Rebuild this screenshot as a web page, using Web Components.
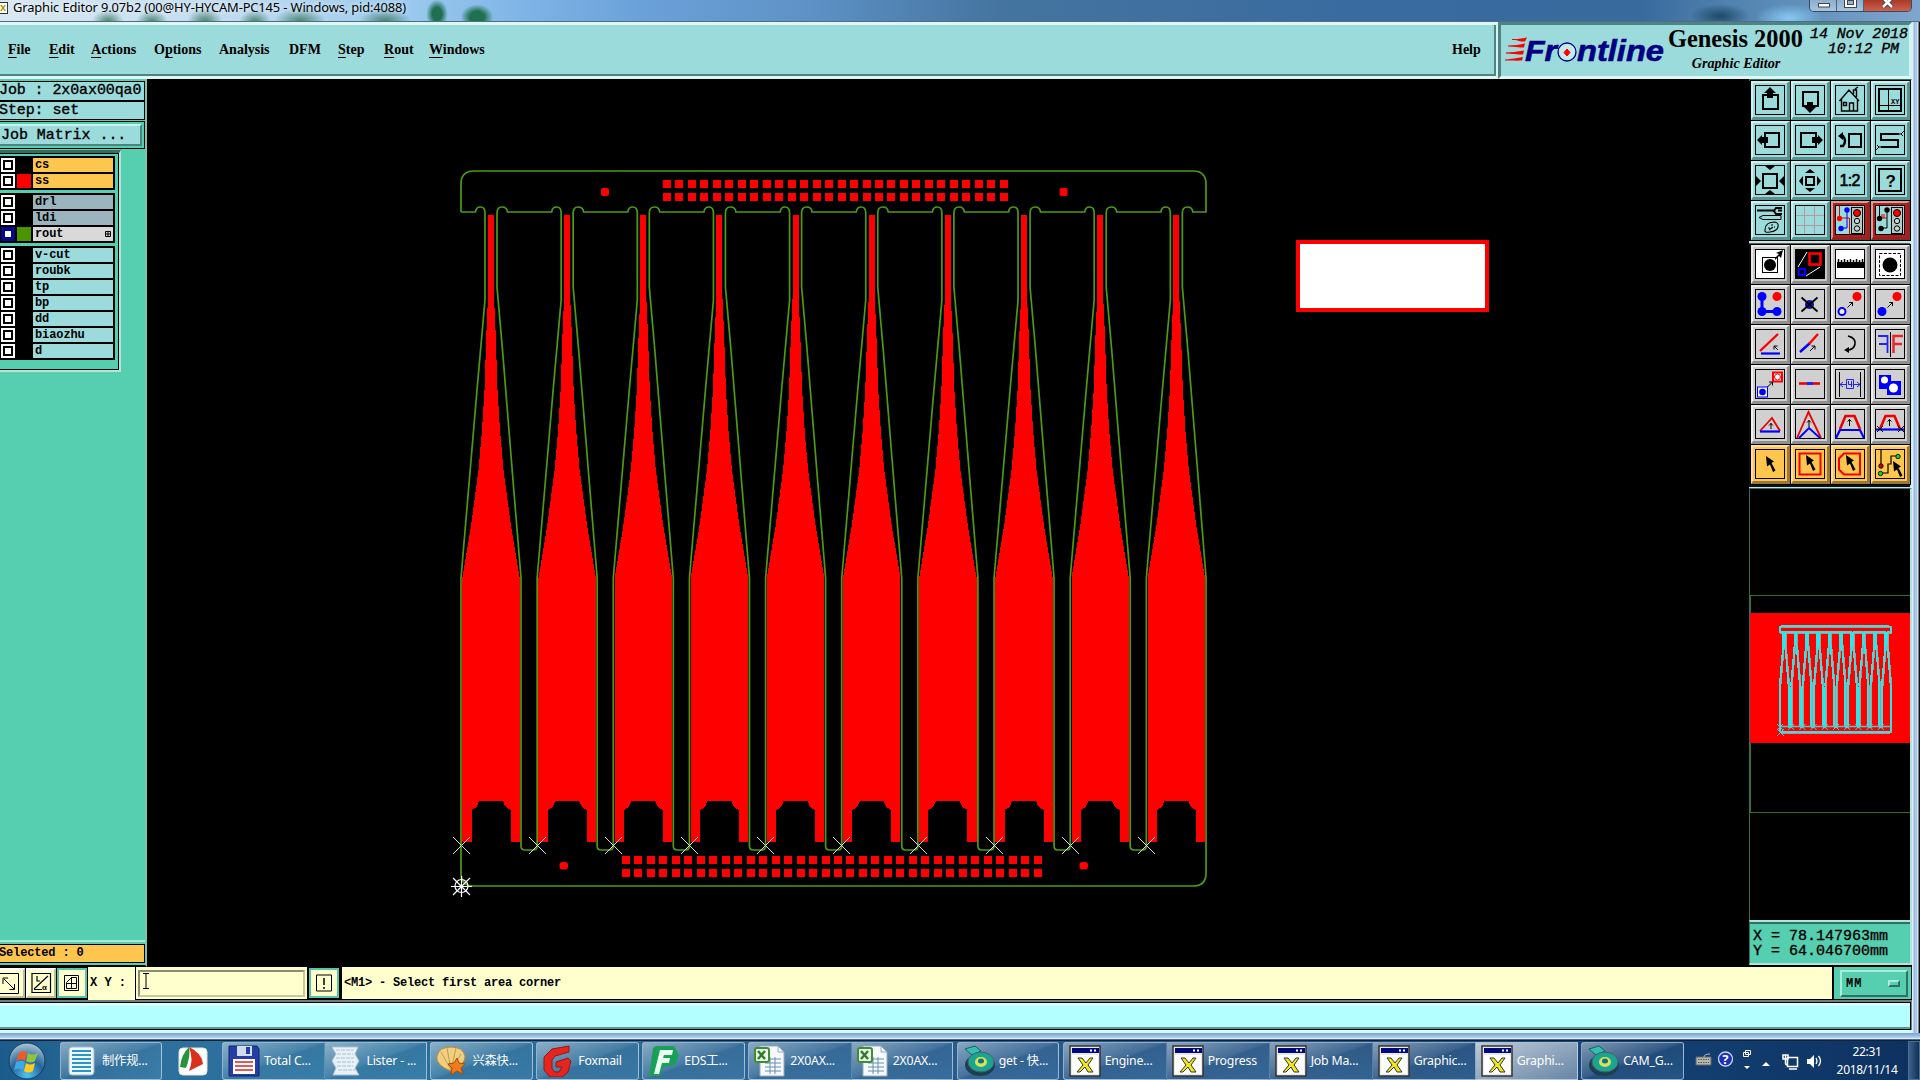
<!DOCTYPE html>
<html lang="en">
<head>
<meta charset="utf-8">
<title>Graphic Editor 9.07b2</title>
<style>
  body {
    margin: 0;
    width: 1920px;
    height: 1080px;
    overflow: hidden;
    background: #000;
  }
</style>
</head>
<body>
<graphic-editor></graphic-editor>
<script>
class BaseElement extends HTMLElement {
  connectedCallback() {
    if (this.shadowRoot) return
    const template = document.createElement('template')
    template.innerHTML = `<style>* { box-sizing: border-box; } ${this.css()}</style>${this.html()}`
    this.attachShadow({ mode: 'open' })
    this.shadowRoot.appendChild(template.content.cloneNode(true))
  }

  css() { return '' }
  html() { return '<slot></slot>' }
}

/* ---------- board geometry ---------- */

const PITCH = 76.15
const UNITS = 10
const range = n => Array.from({ length: n }, (_, i) => i)

function outlinePath() {
  let d = 'M461 212 V184 Q461 171 474 171 H1193 Q1206 171 1206 184 V212 H1193'
  // finger contour, walked from the right
  for (let k = UNITS - 1; k >= 0; k--) {
    const x = 461 + PITCH * k
    d += ` H${x + 46.5} Q${x + 46} 207 ${x + 41} 207 Q${x + 36} 207 ${x + 36} 213`
    d += k === UNITS - 1
      ? ` V287 L${x + 41.5} 350 L${x + 51} 468 L${x + 59.7} 578 V873 Q1206 886 1193 886 H474 Q461 886 461 873 V578`
      : ` V287 L${x + 41.5} 350 L${x + 51} 468 L${x + 60} 578 V846 Q${x + 60} 850 ${x + 64} 850 H${x + 72} Q${x + 76.15} 850 ${x + 76.15} 846 V578`
    d += ` M${x + 24} 213 V300 L${x + 16} 390 L${x} 578`
    d += ` M${x + 24} 213 Q${x + 24} 207 ${x + 19.5} 207 Q${x + 15} 207 ${x + 14.5} 212`
  }
  return d + ' H461'
}

function fingerPath(k) {
  const c = 491 + PITCH * k
  const side = [[3, 215], [3, 297], [4.5, 330], [6.5, 390], [9, 430], [12.5, 470], [20, 526], [28.7, 578], [28.7, 842], [19.5, 842], [19.5, 810], [16, 808], [14, 806], [12, 801]]
  const right = side.map(([w, y]) => `${c + w} ${y}`)
  const left = side.map(([w, y]) => `${c - w} ${y}`).reverse()
  return `M${right.join('L')}L${left.join('L')}Z`
}

function pads(x, y, cols) {
  return range(cols).map(i => {
    const px = Math.round(x + i * 12.47)
    return `<rect x="${px}" y="${y}" width="8" height="8"/><rect x="${px}" y="${y + 13}" width="8" height="8"/>`
  }).join('')
}

class BoardCanvas extends BaseElement {
  css() {
    return `
      :host { display: block; flex: 1; background: #000; overflow: hidden; }
      svg { display: block; }
    `
  }
  html() {
    const marks = range(UNITS).map(k => {
      const x = Math.floor(461.2 + PITCH * k)
      return `M${x - 8} 837 l17 17 M${x + 9} 837 l-17 17`
    }).join('')
    return `
      <svg width="1601" height="888" viewBox="147 79 1601 888">
        <g fill="#f00">
          <path d="${range(UNITS).map(fingerPath).join('')}" shape-rendering="crispEdges"/>
          ${pads(663, 180, 28)}
          ${pads(622, 856, 34)}
          <rect x="601" y="188" width="8" height="8" rx="2"/><rect x="1059.5" y="188" width="8" height="8" rx="2"/>
          <rect x="559.5" y="862" width="8.5" height="7.5" rx="3"/><rect x="1079.5" y="862" width="8.5" height="7.5" rx="3"/>
        </g>
        <path d="${outlinePath()}" fill="none" stroke="#4f9a12" stroke-width="1.7"/>
        <path d="${marks}" stroke="#ddd" fill="none"/>
        <g stroke="#fff" fill="none" stroke-width="1.2">
          <circle cx="461.5" cy="886" r="6.5"/>
          <path d="M451 886.5h21M461.5 876v21M453 878l17 17M470 878l-17 17"/>
        </g>
        <rect x="1298" y="242" width="189" height="68" fill="#fff" stroke="#f00" stroke-width="4"/>
      </svg>
    `
  }
}
customElements.define('board-canvas', BoardCanvas)

class MiniMap extends BaseElement {
  css() {
    return `
      :host { display: block; height: 432px; background: #000; border-left: 1px solid #2f7062; border-right: 2px solid #b0e4dc; border-top: 1px solid #2f7062; }
      svg { display: block; }
    `
  }
  html() {
    return `
      <svg width="160" height="431" viewBox="1750 489 160 431">
        <rect x="1750.5" y="595.5" width="170" height="217" fill="none" stroke="#3c6d1c"/>
        <rect x="1750" y="613" width="160" height="130" fill="#f00"/>
        <path d="${outlinePath()}" transform="translate(1711.6 601.5) scale(.149 .148)" fill="none" stroke="#a99" stroke-width="2" vector-effect="non-scaling-stroke" shape-rendering="crispEdges"/>
        <path d="${outlinePath()}" transform="translate(1711 601) scale(.149 .148)" fill="none" stroke="#2ee6e6" stroke-width="1.8" vector-effect="non-scaling-stroke" shape-rendering="crispEdges"/>
        <path d="M1780 726.5h111" stroke="#4cc" stroke-width="1.5"/>
        <path d="${range(UNITS).map(k => `M${1777 + k * 11.2} 724l6 6m0-6l-6 6`).join('')}M1777 729l7 7m0-7l-7 7" stroke="#5cc"/>
      </svg>
    `
  }
}
customElements.define('mini-map', MiniMap)

/* ---------- tool buttons ---------- */

const cursor = (x = 15, y = 10) => `<path transform="translate(${x} ${y})" d="M0 0L8 5.5L5.5 7L9.500 14.5L7 16L4 8.5L1 10.5Z" fill="#000"/>`
const tinyArrow = (x, y) => `<path d="M${x} ${y}l5-5m-3.5 0h3.5v3.5" fill="none" stroke="#000"/>`
const light = `<rect x="20.5" y="6.5" width="11" height="26" fill="#b9c9c6" stroke="#000"/><circle cx="26" cy="12" r="3.5" fill="#f00" stroke="#000"/><circle cx="26" cy="20" r="2.7" fill="#b9d9d6" stroke="#000"/><circle cx="26" cy="27.5" r="2.7" fill="#b9d9d6" stroke="#000"/>`

const ICONS = {
  panUp: '<rect x="12" y="14" width="15" height="14" fill="none" stroke="#000" stroke-width="2"/><path d="M19 6l6 6h-3v5h-6v-5h-3z"/>',
  panDown: '<rect x="12" y="11" width="15" height="14" fill="none" stroke="#000" stroke-width="2"/><path d="M19 32l6-6h-3v-5h-6v5h-3z"/>',
  home: '<path d="M8.5 20L18 9l10 11M10.5 18v12h16v-12M18.5 30v-8h4v8M12.5 21.5h3v3h-3zM22.5 13v-4h3v7M24 8l3-2" fill="none" stroke="#000" stroke-width="1.4"/>',
  zones: '<rect x="8" y="8" width="22" height="22" fill="none" stroke="#000" stroke-width="2"/><path d="M17.5 7v23M8 24.5h22" stroke="#000"/><text x="20" y="22.5" font-size="7" font-family="Liberation Mono" font-weight="bold">XY</text>',
  panLeft: '<rect x="14" y="12" width="14" height="14" fill="none" stroke="#000" stroke-width="2"/><path d="M6 19l5-5v2h6v6h-6v2z"/>',
  panRight: '<rect x="10" y="12" width="15" height="14" fill="none" stroke="#000" stroke-width="2"/><path d="M32 19l-5-5v2h-6v6h6v2z"/>',
  zoomBack: '<rect x="18" y="13" width="12" height="13" fill="none" stroke="#000" stroke-width="2"/><path d="M7 15l5-4v8z"/><path d="M10 15h2q4 5 0 10h-3" fill="none" stroke="#000" stroke-width="2.4"/>',
  serpent: '<path d="M28 13H10v6h17v7H10" fill="none" stroke="#000" stroke-width="2"/><path d="M27 13h3l3-3M30 13l2 2M10 26H8l-3 3M8 26l-2-2" fill="none" stroke="#000"/>',
  zoomOut: '<rect x="12" y="13" width="14" height="14" fill="none" stroke="#000" stroke-width="2"/><path d="M14 5h10l-5 4zM14 33h10l-5-4zM5 15v10l5-5zM33 15v10l-5-5z"/>',
  zoomIn: '<rect x="15" y="16" width="8" height="8" fill="none" stroke="#000" stroke-width="2"/><path d="M14 12h10l-5-4zM14 27h10l-5 4zM12 15v10l-4-5zM26 15v10l4-5z"/>',
  oneTwo: '<text x="8.5" y="25" font-size="16" font-family="Liberation Sans" textLength="21" stroke="#000" stroke-width=".6">1:2</text>',
  query: '<rect x="8" y="8" width="22" height="22" fill="none" stroke="#000" stroke-width="2"/><text x="14.5" y="26" font-size="17" font-family="Liberation Sans" font-weight="bold">?</text>',
  setup: '<path d="M8 16.5l4-2h18v4H12z" fill="none" stroke="#000"/><path d="M6 8.5h17v2H6z"/><path d="M31 7h-6l-2 3 2 3h6M27 9.5h4" fill="none" stroke="#000" stroke-width="2"/><path d="M14 29q0-8 10-8 4 1 3 5t-8 5q-6 1-5-2zM17 27h2M20 24h2M23 26h1M18 29l4-3" fill="none" stroke="#000" stroke-width="1.1"/>',
  grid: '<path d="M13.5 5v28M23.5 5v28M5 14.5h28M5 24.5h28" stroke="#b59aa2"/>',
  netOn: `<path d="M8.5 5v12h10v16" fill="none" stroke="#d00"/><path d="M16 9v18h-6" fill="none" stroke="#00f"/><circle cx="8.5" cy="17.5" r="2.7" fill="#f00"/><circle cx="16" cy="9" r="2.7" fill="#00f"/><circle cx="10" cy="27.5" r="2.7" fill="#00f"/>${light}`,
  netOff: `<path d="M8.5 5v12M16 9v18h-6" fill="none" stroke="#000"/><path d="M10 17h6M11 17v-4M13 17v-4" fill="none" stroke="#d00"/><circle cx="8.5" cy="17.5" r="2.7"/><circle cx="16" cy="9" r="2.7"/><circle cx="10" cy="27.5" r="2.7"/>${light}`,
  single: '<rect x="11.5" y="12.5" width="15" height="15" fill="none" stroke="#000"/><circle cx="19" cy="20" r="6"/><path d="M24 13l4-4-3-1 7-3-2 8-2-2-4 4z"/>',
  connect: '<rect x="5" y="5" width="28" height="28"/><path d="M7 22L16 7M15 31l14-9" stroke="#fff"/><rect x="18.5" y="8.5" width="11" height="11" fill="none" stroke="#f00" stroke-width="2.6"/><rect x="8" y="24" width="6" height="6" fill="none" stroke="#00f" stroke-width="2.2"/>',
  ruler: '<path d="M6 17h27v6H6z"/><path d="M7.5 14v4M10.5 15v3M13.5 14v4M16.5 15v3M19.5 14v4M22.5 15v3M25.5 14v4M28.5 15v3M31.5 14v4" stroke="#000" stroke-width="1.5"/>',
  isolate: '<rect x="8.5" y="8.5" width="21" height="22" fill="none" stroke="#000" stroke-dasharray="3 1.5"/><circle cx="19" cy="20" r="7.5"/>',
  move: '<path d="M11 11.5v15h15" fill="none" stroke="#00f" stroke-width="3"/><g fill="#00f"><circle cx="11" cy="11.5" r="4.5"/><circle cx="11" cy="26.5" r="4.5"/><circle cx="26" cy="26.5" r="4.5"/></g><circle cx="26" cy="11.5" r="4.5" fill="#f00"/>',
  remove: '<circle cx="18.5" cy="19.5" r="4.5" fill="#11a"/><path d="M10.5 12.5l16 14M26.5 12.5l-16 14" stroke="#000" stroke-width="1.8"/>',
  copy: `<circle cx="11" cy="26.5" r="3.5" fill="#eee" stroke="#00f" stroke-width="2"/><circle cx="26" cy="11.5" r="4.5" fill="#f00"/>${tinyArrow(16.5, 22.5)}`,
  duplicate: `<circle cx="11" cy="26.5" r="4.5" fill="#00f"/><circle cx="26" cy="11.5" r="4.5" fill="#f00"/>${tinyArrow(16.5, 22.5)}`,
  angle: '<path d="M9 26L27 9" stroke="#f00" stroke-width="2.4"/><path d="M10 28.5h19" stroke="#00f" stroke-width="2.2"/><path d="M27 25l-4-4m0 3.5v-3.5h3.5" fill="none" stroke="#000"/>',
  stretch: `<path d="M9 27l10-9" stroke="#00f" stroke-width="2.4"/><path d="M18 19l9-10" stroke="#f00" stroke-width="2.4"/>${tinyArrow(19, 26)}`,
  rotate: '<path d="M17 11q8 2 7 8t-8 6" fill="none" stroke="#000" stroke-width="1.6"/><path d="M13 25l5-3v6z"/>',
  mirror: '<path d="M19.5 7v25" stroke="#000"/><path d="M7 11h9.5v17M8 19h8" fill="none" stroke="#22f" stroke-width="1.8"/><path d="M32 11h-9.5v17M31 19h-8" fill="none" stroke="#e22" stroke-width="2.4"/>',
  swap: `<rect x="22" y="7.5" width="9" height="9" fill="#fff" stroke="#f00" stroke-width="2"/><circle cx="26.5" cy="12" r="3" fill="#fff" stroke="#f00"/><rect x="6.5" y="22" width="10" height="10" fill="#eee" stroke="#00f"/><circle cx="11.5" cy="27" r="3.3" fill="#00f"/>${tinyArrow(16.5, 22)}`,
  breakLine: '<path d="M8 18.5h21" stroke="#e00" stroke-width="2.6"/><path d="M16 18.5h6" stroke="#22f" stroke-width="3"/>',
  spacing: '<path d="M8.5 7v25M29.5 7v25" stroke="#000"/><path d="M9 19.5h6M23 19.5h6M12 17l-3 2.5 3 2.5M26 17l3 2.5-3 2.5M15.5 14.5h7v9h-7zM17.5 16v3.5h4M20.5 16v6" fill="none" stroke="#22f"/>',
  merge: '<path d="M8 10h12v6h10v14H16v-6H8z" fill="#00f"/><circle cx="13.5" cy="15" r="3.5" fill="#fff"/><circle cx="22.5" cy="23" r="4.5" fill="#fff"/>',
  tri: '<path d="M9 26L21 13l8 13" fill="none" stroke="#e00" stroke-width="1.8"/><path d="M9 26.5h20" stroke="#00f" stroke-width="2.2"/><path d="M20 24v-6M18 20.5l2-2 2 2" fill="none" stroke="#000"/>',
  peak: '<path d="M6 33L17.5 7 30 33" fill="none" stroke="#e00" stroke-width="1.8"/><path d="M8 33l10-10 11 10" fill="none" stroke="#00f" stroke-width="1.8"/><path d="M18 22v-7M16 17.5l2-2 2 2" fill="none" stroke="#000"/>',
  trapezoid: '<path d="M9 24l5.5-13h9L29 24" fill="none" stroke="#e00" stroke-width="2.6"/><path d="M5 33l4-8h20l4 8" fill="none" stroke="#00f" stroke-width="2.2"/><path d="M18.5 21v-7M16.5 16.5l2-2 2 2" fill="none" stroke="#000"/>',
  trapezoidX: '<path d="M9 24l5.5-13h9L29 24" fill="none" stroke="#e00" stroke-width="2.6"/><path d="M5 24.5h28" stroke="#00f" stroke-width="2.2"/><path d="M18.5 21v-7M16.5 16.5l2-2 2 2M6 21l6 6m0-6l-6 6M27 21l6 6m0-6l-6 6" fill="none" stroke="#000"/>',
  pick: cursor(15, 11),
  pickBox: `<rect x="8.5" y="8.5" width="21" height="21" fill="none" stroke="#e00" stroke-width="2"/>${cursor()}`,
  pickPoly: `<path d="M13 8.5h16v21H13l-5-5v-11z" fill="none" stroke="#e00" stroke-width="2"/>${cursor()}`,
  pickNet: `<path d="M10 5v16M9 28h8v-9h3v-8h7" fill="none" stroke="#000" stroke-width="1.2"/><circle cx="10" cy="21" r="2.2" fill="#a10" stroke="#300"/><circle cx="9.5" cy="28.5" r="2.2" fill="#2c2" stroke="#020"/><circle cx="27" cy="11.5" r="2.2" fill="#2c2" stroke="#020"/>${cursor(22, 16)}`
}

class ToolButton extends BaseElement {
  css() {
    return `
      :host {
        --face: #9cdbdb; --hi: #c9f2f0; --lo: #5a9391; --paper: var(--face);
        display: block; width: 39px; height: 39px;
        background: var(--face);
        border: 3px solid; border-width: 2px 3px 3px 2px;
        border-color: var(--hi) var(--lo) var(--lo) var(--hi);
        outline: 1px solid #000;
      }
      :host([tone="white"]) { --face: #c6c6c6; --hi: #e8e8e8; --lo: #8c8c8c; --paper: #fff; }
      :host([tone="grey"]) { --face: #d0d0d0; --hi: #efefef; --lo: #8f8f8f; }
      :host([tone="orange"]) { --face: #ffc64f; --hi: #ffe0a0; --lo: #9a7838; }
      :host([tone="alert"]) { --face: #c01818; --hi: #d3a19c; --lo: #8e2626; --paper: #9cdbdb; }
      svg { display: block; margin: -2px; }
    `
  }
  html() {
    return `
      <svg width="39" height="39" viewBox="0 0 39 39">
        <rect x="4.5" y="4.5" width="29" height="29" style="fill: var(--paper)" stroke="#000"/>
        ${ICONS[this.getAttribute('icon')]}
      </svg>
    `
  }
}
customElements.define('tool-button', ToolButton)

const buttons = (names, tone) => names.split(' ').map(n => {
  const t = n.startsWith('net') ? 'alert' : tone
  return `<tool-button icon="${n}" tone="${t}"></tool-button>`
}).join('')

class ToolPalette extends BaseElement {
  css() {
    return `
      :host { display: block; width: 163px; height: 409px; background: #bfe9e4; border-top: 2px solid #2f7062; border-right: 2px solid #c9f2f0; }
      div { display: grid; grid-template-columns: repeat(4, 39px); gap: 1px; background: #000; padding: 0 0 1px 2px; width: 161px; }
      div + div { background: #111; margin-top: 2px; padding-top: 1px; border-top: 1px solid #555; padding-bottom: 3px; }
    `
  }
  html() {
    return `
      <div>${buttons('panUp panDown home zones panLeft panRight zoomBack serpent zoomOut zoomIn oneTwo query setup grid netOn netOff', 'cyan')}</div>
      <div>
        ${buttons('single connect ruler isolate', 'white')}
        ${buttons('move remove copy duplicate angle stretch rotate mirror swap breakLine spacing merge tri peak trapezoid trapezoidX', 'grey')}
        ${buttons('pick pickBox pickPoly pickNet', 'orange')}
      </div>
    `
  }
}
customElements.define('tool-palette', ToolPalette)

/* ---------- title bar, menu, logo ---------- */

class TitleBar extends BaseElement {
  css() {
    return `
      :host {
        display: flex; height: 21px; overflow: hidden;
        font: 12.9px/15px "Noto Sans", sans-serif; color: #000;
        background:
          radial-gradient(ellipse 12px 16px at 437px 14px, #1f7050 40%, transparent 90%),
          radial-gradient(ellipse 18px 14px at 477px 17px, #1f7050 40%, transparent 90%),
          radial-gradient(ellipse 16px 12px at 108px 22px, #47826e, transparent),
          radial-gradient(ellipse 16px 12px at 152px 22px, #47826e, transparent),
          radial-gradient(ellipse 18px 14px at 205px 22px, #47826e, transparent),
          radial-gradient(ellipse 16px 12px at 255px 22px, #47826e, transparent),
          radial-gradient(ellipse 26px 14px at 300px 22px, #47826e, transparent),
          radial-gradient(ellipse 26px 14px at 385px 22px, #47826e, transparent),
          radial-gradient(ellipse 30px 12px at 1720px 16px, #1e4a68, transparent),
          radial-gradient(ellipse 34px 14px at 1789px 18px, #86c9f4, transparent),
          linear-gradient(90deg, #d9e7f2 0, #c2dcf0 220px, #9ccbee 400px, #7db3e6 530px, #6aa1d8 640px, #5f93c8 800px, #44749f 1000px, #3a6ba0 1350px, #396a9e 1640px, #5587b3 1750px, #7fa6cf 1920px);
      }
      .app { width: 8px; height: 12px; margin: 2px 5px 0 0; background: #fff; border: 1px solid #333; border-left: 0; color: #a90; font: bold 11px/9px "Liberation Sans", sans-serif; }
      .name { white-space: pre; letter-spacing: -.13px; text-shadow: 0 0 5px #fff; line-height: 14px; height: 20px; }
      .controls { display: flex; margin-left: auto; margin-right: 8px; height: 12px; border: 1px solid #334b63; border-top: 0; border-radius: 0 0 5px 5px; overflow: hidden; }
      .controls svg { display: block; }
      .controls span { width: 27px; background: linear-gradient(#8faecb, #a7c3de); border-right: 1px solid #496280; }
      .controls span:last-child { width: 47px; border: 0; background: linear-gradient(#a83a28, #d0604c); }
    `
  }
  html() {
    return `
      <div class="app">x</div>
      <div class="name">Graphic Editor 9.07b2 (00@HY-HYCAM-PC145 - Windows, pid:4088)</div>
      <div class="controls">
        <span><svg width="27" height="11"><rect x="8.5" y="3.5" width="11" height="3.5" fill="#fff" stroke="#445"/></svg></span>
        <span><svg width="27" height="11"><path d="M9 -1h9v7H9z" fill="none" stroke="#445" stroke-width="4"/><path d="M9 -1h9v7H9z" fill="none" stroke="#fff" stroke-width="2"/></svg></span>
        <span><svg width="47" height="11"><path d="M19 -2l9 9M28 -2l-9 9" stroke="#444" stroke-width="4.5"/><path d="M19 -2l9 9M28 -2l-9 9" stroke="#fff" stroke-width="2.6"/></svg></span>
      </div>
    `
  }
}
customElements.define('title-bar', TitleBar)

class MenuBar extends BaseElement {
  css() {
    return `
      :host {
        display: flex; align-items: center; width: 1498px; height: 57px; padding: 0 12px 2px 8px;
        background: #9cdbdb;
        border-top: 3px solid #dff6f4; border-right: 2px solid #d4f3f1; border-bottom: 3px solid #dff6f4;
        box-shadow: inset -2px -2px #4f8383;
        font: bold 14px/16px "Liberation Serif", serif;
      }
      span { width: var(--w); white-space: nowrap; }
      span:last-child { margin-left: auto; }
      u { text-underline-offset: 3px; text-decoration-thickness: 1px; }
    `
  }
  html() {
    return `
      <span style="--w:41px"><u>F</u>ile</span><span style="--w:42px"><u>E</u>dit</span><span style="--w:63px"><u>A</u>ctions</span>
      <span style="--w:65px">O<u>p</u>tions</span><span style="--w:70px">Analysis</span><span style="--w:49px">DFM</span>
      <span style="--w:46px"><u>S</u>tep</span><span style="--w:45px"><u>R</u>out</span><span style="--w:60px"><u>W</u>indows</span>
      <span style="--w:32px">Help</span>
    `
  }
}
customElements.define('menu-bar', MenuBar)

class BrandPanel extends BaseElement {
  css() {
    return `
      :host {
        display: flex; flex: 1; height: 57px; background: #9cdbdb;
        border: 3px solid; border-color: #4f8383 #d4f3f1 #dff6f4 #4f8383;
      }
      .logo { display: block; margin-left: 1px; flex: none; }
      .product { width: 136px; margin-left: 4px; flex: none; text-align: center; white-space: nowrap; }
      h1 { margin: 1px 0 0; font: bold 24.4px/26px "Liberation Serif", serif; text-align: left; }
      em { display: block; font: italic bold 14.2px/15px "Liberation Serif", serif; margin-top: 4px; }
      .date { flex: 1; white-space: pre; margin: 2px 0 0 6px; font: italic 15px/15px "Liberation Mono", monospace; letter-spacing: -.1px; -webkit-text-stroke: .35px #000; }
    `
  }
  html() {
    return `
      <svg class="logo" width="162" height="44" viewBox="1502 25 162 44">
        <g fill="#f00"><path d="M1514 39.5l7-1 6-1-2 4h-4zM1508 46l9-1 8-1.5-1 4h-4zM1505 53l9-1 10-1.5-1 4h-4zM1505 59.5l9-1 9-1.5-1 3.5h-4z"/></g>
        <path d="M1512 39.5h12M1508 46h14M1506 53h14M1505 60h14" stroke="#f00"/>
        <g font-family="Liberation Sans" font-weight="bold" font-style="italic" font-size="30" fill="#000080" stroke="#000080" stroke-width=".6">
          <text x="1525" y="60.5" textLength="32" lengthAdjust="spacingAndGlyphs">Fr</text>
          <text x="1577" y="60.5" textLength="87" lengthAdjust="spacingAndGlyphs">ntline</text>
        </g>
        <circle cx="1567" cy="52" r="9" fill="#c4ebea" stroke="#000080" stroke-width="1.3"/>
        <path d="M1567 49l3 3.5-3 3.5-3-3.5z" fill="#f00" stroke="#f00"/>
      </svg>
      <div class="product"><h1>Genesis 2000</h1><em>Graphic Editor</em></div>
      <div class="date">14 Nov 2018<br>  10:12 PM</div>
    `
  }
}
customElements.define('brand-panel', BrandPanel)

/* ---------- left panel ---------- */

class LayerRow extends BaseElement {
  css() {
    return `
      :host { display: flex; height: 16px; padding: 1px; gap: 2px; background: #000; font: bold 12px/12px "Liberation Mono", monospace; }
      .check { width: 14px; height: 14px; background: #fff; padding: 2px; }
      .check i { display: block; width: 10px; height: 10px; background: #fff; border: 2px solid #000; }
      :host([active]) .check { background: #000a8a; }
      :host([active]) .check i { border-color: #000a8a; }
      .swatch { width: 14px; background: var(--swatch, #000); }
      .name { flex: 1; display: flex; justify-content: space-between; background: var(--fill, #9cdbdb); padding: 1px 2px 0 2px; height: 14px; letter-spacing: -.1px; }
      svg { margin-top: 3px; }
    `
  }
  html() {
    const grid = this.hasAttribute('active')
      ? '<svg width="6" height="6"><path d="M.5.5h5v5h-5zM3 0v6M0 3h6" fill="none" stroke="#000"/></svg>' : ''
    return `<span class="check"><i></i></span><span class="swatch"></span><span class="name"><slot></slot>${grid}</span>`
  }
}
customElements.define('layer-row', LayerRow)

class SidePanel extends BaseElement {
  css() {
    return `
      :host {
        display: flex; flex-direction: column; width: 147px; height: 888px; background: #56cfb0;
        border-right: 2px solid #7cc5b2; border-bottom: 2px solid #000;
        font: 15px/17px "Liberation Mono", monospace; -webkit-text-stroke: .35px #000;
      }
      .info { background: #9cdbdb; border: 1px solid #000; border-left: 0; width: 145px; height: 19px; white-space: pre; text-indent: -1px; letter-spacing: -.1px; }
      .info.job { margin-top: 2px; height: 20px; }
      .matrix { width: 145px; height: 28px; margin-top: 1px; border: 1px solid #000; border-left: 0; padding: 2px 2px 2px 0; }
      .matrix div { height: 22px; background: #9cdbdb; border-top: 2px solid #c9f2f0; border-right: 2px solid #4f8383; border-bottom: 2px solid #4f8383; padding-left: 1px; line-height: 19px; letter-spacing: -.05px; white-space: pre; }
      .layers { width: 121px; height: 222px; margin-top: 1px; border-right: 2px solid #b0e9dc; border-bottom: 2px solid #b0e9dc; border-top: 3px solid #2f7062; -webkit-text-stroke: 0; }
      .frame { height: 217px; border: 1px solid #000; border-left: 0; padding: 2px 3px 0 0; }
      .group { border: 1px solid #000; border-left: 0; margin-bottom: 3px; }
      .selected { margin-top: auto; border-top: 2px solid #a8e8d8; width: 145px; padding-top: 2px; margin-bottom: 2px; }
      .selected div { height: 19px; border: 1px solid #000; border-left: 0; background: #ffc64f; font: bold 12px/16px "Liberation Mono", monospace; text-indent: -1px; letter-spacing: -.15px; -webkit-text-stroke: 0; }
    `
  }
  html() {
    return `
      <div class="info job">Job : 2x0ax00qa0</div>
      <div class="info">Step: set</div>
      <div class="matrix"><div>Job Matrix ...</div></div>
      <div class="layers"><div class="frame">
        <div class="group">
          <layer-row style="--fill:#ffc64f">cs</layer-row>
          <layer-row style="--fill:#ffc64f;--swatch:#f00">ss</layer-row>
        </div>
        <div class="group">
          <layer-row style="--fill:#9cb4bd">drl</layer-row>
          <layer-row style="--fill:#9cb4bd">ldi</layer-row>
          <layer-row style="--fill:#d9d9d9;--swatch:#4a9400" active>rout</layer-row>
        </div>
        <div class="group">
          ${['v-cut', 'roubk', 'tp', 'bp', 'dd', 'biaozhu', 'd'].map(n => `<layer-row>${n}</layer-row>`).join('')}
        </div>
      </div></div>
      <div class="selected"><div>Selected : 0</div></div>
    `
  }
}
customElements.define('side-panel', SidePanel)

/* ---------- coordinates and command line ---------- */

class CoordReadout extends BaseElement {
  css() {
    return `
      :host {
        display: block; height: 45px; background: #56cfb0; padding: 7px 0 0 3px; white-space: pre;
        border: 1px solid #2f7062; border-top: 2px solid #b0e4dc; border-right: 2px solid #b0e4dc; border-bottom: 2px solid #b0e4dc;
        font: 15px/15px "Liberation Mono", monospace; -webkit-text-stroke: .35px #000;
        box-shadow: inset 0 2px #2f7062;
      }
    `
  }
}
customElements.define('coord-readout', CoordReadout)

class CommandBar extends BaseElement {
  css() {
    return `
      :host { display: flex; height: 33px; background: #000; gap: 1px; font: bold 12px/14px "Liberation Mono", monospace; }
      svg { display: block; }
      .btn { background: #ffffce; border: 2px solid; border-color: #fff #bdbd94 #bdbd94 #fff; height: 30px; margin-top: 1px; padding: 2px; }
      .first { width: 25px; border-left: 0; padding-left: 0; }
      .teal { width: 30px; border: 2px solid #56c5a8; }
      .xy { width: 47px; background: #ffffce; line-height: 32px; padding-left: 2px; white-space: pre; }
      .field { width: 171px; background: #ffffce; height: 32px; padding: 3px 2px; }
      .field div { height: 27px; border: 2px solid; border-color: #8c8c70 #c9c9a0 #c9c9a0 #8c8c70; padding-left: 3px; }
      .status { flex: 1; background: #ffffce; line-height: 32px; margin-left: 2px; padding-left: 2px; height: 32px; letter-spacing: -.2px; }
      .units { width: 78px; height: 32px; background: #56cfb0; padding: 3px; padding-left: 6px; border-right: 1px solid #222; margin-left: 1px; }
      .units div { display: flex; align-items: center; justify-content: space-between; height: 27px; padding: 0 6px 0 4px; border: 2px solid; border-color: #a8ecdb #2f7062 #2f7062 #a8ecdb; letter-spacing: 1px; }
      .units i { width: 12px; height: 7px; border: 2px solid; border-color: #a8ecdb #2f7062 #2f7062 #a8ecdb; }
    `
  }
  html() {
    return `
      <div class="btn first"><svg width="22" height="24" viewBox="0 0 22 24"><path d="M0 1.5h18.5v20H0M4 7l10 10M3 12V6h5M14.5 12v5.5h-5" fill="none" stroke="#000"/></svg></div>
      <div class="btn" style="width:30px"><svg width="22" height="22" viewBox="0 0 22 22"><path d="M2 1.5h18.5v19H2zM4 17L18 4M4 17.5h8M7 4v5h3" fill="none" stroke="#000" stroke-width="1.2"/><text x="12" y="18" font-size="8" font-family="Liberation Sans">α</text></svg></div>
      <div class="btn teal"><svg width="21" height="22" viewBox="0 0 21 22"><path d="M3.5 3.5h14v15h-14z" fill="none" stroke="#000"/><path d="M5.5 10.5l5-5h5v11h-10zM10.5 5v12M5 11.5h11" fill="none" stroke="#000"/></svg></div>
      <div class="xy">X Y :</div>
      <div class="field"><div><svg width="8" height="19" viewBox="0 0 8 19"><path d="M0 1.5h6M3 1.5v15M0 16.5h6" stroke="#000" fill="none"/></svg></div></div>
      <div class="btn teal" style="margin-left:1px"><svg width="21" height="22" viewBox="0 0 21 22"><path d="M3.5 3h15v16h-15z" fill="none" stroke="#000"/><path d="M11 6v7M11 15v2" stroke="#000" stroke-width="1.5"/></svg></div>
      <div class="status">&lt;M1&gt; - Select first area corner</div>
      <div class="units"><div>MM<i></i></div></div>
    `
  }
}
customElements.define('command-bar', CommandBar)

/* ---------- taskbar ---------- */

const APP_ICONS = {
  notes: '<rect x="3" y="2" width="25" height="28" rx="3" fill="#eef6fa" stroke="#9bc"/><path d="M6 6h19M6 10h19M6 14h19M6 18h19M6 22h19M6 26h19" stroke="#2b95c8" stroke-width="2"/>',
  disk: '<path d="M1 1h28l2 3v27H1z" fill="#233ea6" stroke="#14246a"/><rect x="9" y="1" width="15" height="10" fill="#cfdcea"/><rect x="18" y="2" width="4" height="7" fill="#233ea6"/><rect x="5" y="14" width="22" height="15" fill="#fff"/><path d="M7 17h18M7 21h18M7 25h18" stroke="#d22" stroke-width="1.5"/>',
  lister: '<path d="M2 2h26l-3 7 4 7-4 7 4 7H3l3-7-4-7 4-7z" fill="#e8f1f8" stroke="#aac2d4"/><path d="M6 5h18M7 9h16M6 13h18M7 17h17M7 21h16M8 25h17" stroke="#abc0d0" stroke-dasharray="4 1"/>',
  shell: '<path d="M15 26Q-1 20 1 11 3 2 15 2t14 9q1 8-14 15z" fill="#f0cf83" stroke="#b98a35"/><path d="M15 25L5 7M15 25L11 3M15 25l5-22M15 25l10-16" stroke="#c99c42"/><path d="M21 13l2 5 6 1-4 4 2 6-6-3-6 4 1-7-4-4 6-1z" fill="#f07b1e" stroke="#a64c08"/>',
  fox: '<path d="M27 1v6l-14 4-3 4v9l3 3h4l3-5h-6v-5l12-4 3 3-3 11-6 5H8l-6-7V12l8-8z" fill="#e52620" stroke="#9a1511"/>',
  eds: '<path d="M8 1h18l5 9-4 10-12 2-3 9H1L5 3z" fill="#19a058"/><path d="M12 5h13l-1 5h-8l-1 3h7l-1 5h-7l-3 11H6z" fill="#e9fff0"/>',
  excel: '<path d="M6 1h18l6 6v24H6z" fill="#f5f9fc" stroke="#9ab"/><path d="M24 1v6h6" fill="none" stroke="#9ab"/><path d="M11 14h16M11 18h16M11 22h16M11 26h16M16 12v17M21 12v17" stroke="#6a8fae"/><rect x="1" y="3" width="14" height="14" rx="2" fill="#eef7ea" stroke="#3f8d35" stroke-width="2"/><path d="M4 6l7 8M11 6l-7 8" stroke="#2f7d28" stroke-width="2.5"/>',
  get: '<path d="M2 4l10-3 6 5-9 4z" fill="#38bdb4" stroke="#165"/><ellipse cx="17" cy="20" rx="15" ry="11" fill="#1d4050"/><ellipse cx="18" cy="17" rx="13" ry="10" fill="#19a58e" stroke="#4b5b78"/><ellipse cx="18" cy="17" rx="6" ry="5" fill="#d9df62"/><ellipse cx="18" cy="16" rx="3" ry="2.5" fill="#15756e"/>',
  xwin: '<path d="M1 1h30v30H1z" fill="#ece9e0" stroke="#333" stroke-width="1.5"/><path d="M3 3h27v5H3z" fill="#000a7c"/><path d="M21 4.5h2v2h-2zM25 4.5h2v2h-2z" fill="#fff"/><path d="M3 10h26v19H3z" fill="#fff"/><path d="M9 13h4l4 5 4-5h3l-5 7 5 7h-5l-3-5-5 5H8l6-7z" fill="#f2e51a" stroke="#333"/>'
}

class TaskButton extends BaseElement {
  css() {
    return `
      :host {
        display: flex; align-items: center; gap: 4px; width: 102px; height: 38px; padding-left: 5px; flex: none;
        font: 12.3px/16px "Noto Sans", "Noto Sans CJK SC", sans-serif; color: #fff; white-space: nowrap; letter-spacing: -.2px;
        border: 1px solid rgba(195, 215, 230, .65); border-radius: 3px;
        background: linear-gradient(160deg, rgba(255,255,255,.45), rgba(255,255,255,.14) 48%, rgba(255,255,255,.06) 52%, rgba(120,190,230,.18));
      }
      :host([joined]) { border-right: 0; border-radius: 3px 0 0 3px; }
      :host([tail]) { border-left-color: rgba(195, 215, 230, .25); border-radius: 0; }
      :host([active]) { background: linear-gradient(160deg, rgba(255,255,255,.7), rgba(255,255,255,.35)); }
      svg { flex: none; }
    `
  }
  html() {
    return `<svg width="32" height="32" viewBox="0 0 32 32">${APP_ICONS[this.getAttribute('icon')]}</svg><slot></slot>`
  }
}
customElements.define('task-button', TaskButton)

class TaskBar extends BaseElement {
  css() {
    return `
      :host {
        display: flex; align-items: center; height: 40px; border-top: 1px solid #0b2439; padding-left: 6px;
        background: linear-gradient(90deg, #1c5c8c, #2d709d 170px, #28709c 400px, #2c6695 700px, #275a8d 1000px, #265484 1300px, #123f72 1680px, #0d315f 1920px);
        font: 12px/15px "Noto Sans", "Noto Sans CJK SC", sans-serif; color: #fff;
      }
      .orb { width: 40px; height: 38px; margin-right: 14px; flex: none; }
      .flag { width: 30px; height: 30px; margin: 0 14px 0 16px; flex: none; }
      .set { display: flex; margin-right: 3.6px; flex: none; }
      .set task-button { width: var(--w, 102.4px); }
      .tray { display: flex; align-items: center; margin-left: 7px; flex: none; }
      .clock { width: 88px; text-align: center; line-height: 18px; font-size: 12px; white-space: nowrap; letter-spacing: -.3px; }
      .peek { width: 13px; height: 39px; margin-left: auto; border: 1px solid #4a6f94; background: linear-gradient(90deg, #3d618a, #122f55); }
    `
  }
  html() {
    return `
      <svg class="orb" viewBox="0 0 40 38">
        <defs><radialGradient id="orb" cx=".5" cy=".9" r=".9"><stop offset="0" stop-color="#4fc4f4"/><stop offset=".5" stop-color="#24659b"/><stop offset="1" stop-color="#aec7d6"/></radialGradient></defs>
        <ellipse cx="21" cy="19" rx="18" ry="18" fill="url(#orb)" stroke="#163b5c"/>
        <path d="M13 11q5-4 8 0l-2 8q-4-3-9 0z" fill="#ef5a28"/><path d="M22 11q5 3 10 0l-3 8q-4 3-9 0z" fill="#8cc63e"/>
        <path d="M10 20q5-3 9 0l-2 8q-4-3-9 0z" fill="#3fa9e8"/><path d="M20 21q4 3 9 0l-2 8q-5 3-9 0z" fill="#ffcb1f"/>
      </svg>
      <task-button icon="notes">制作规...</task-button>
      <svg class="flag" viewBox="0 0 30 30"><rect x="1" y="2" width="28" height="27" rx="4" fill="#fff" stroke="#d9e6dc"/><path d="M11 1q2 8-3 21l-6-1q1-12 9-20z" fill="#25943a"/><path d="M11 1q13 6 14 17l-14 7q5-11 0-24z" fill="#dd301c"/></svg>
      <div class="set"><task-button icon="disk" joined>Total C...</task-button><task-button icon="lister" tail>Lister - ...</task-button></div>
      <div class="set"><task-button icon="shell">兴森快...</task-button></div>
      <div class="set"><task-button icon="fox">Foxmail</task-button></div>
      <div class="set"><task-button icon="eds">EDS工...</task-button></div>
      <div class="set"><task-button icon="excel" joined>2X0AX...</task-button><task-button icon="excel" tail>2X0AX...</task-button></div>
      <div class="set"><task-button icon="get">get - 快...</task-button></div>
      <div class="set" style="--w:103px">
        <task-button icon="xwin" joined>Engine...</task-button><task-button icon="xwin" joined tail>Progress</task-button><task-button icon="xwin" joined tail>Job Ma...</task-button><task-button icon="xwin" joined tail>Graphic...</task-button><task-button icon="xwin" tail active>Graphi...</task-button>
      </div>
      <div class="set"><task-button icon="get">CAM_G...</task-button></div>
      <div class="tray">
        <svg width="132" height="38" viewBox="1694 1041 132 38">
          <path d="M1696 1056h15v8h-15z" fill="#b7b7ad" stroke="#666"/><path d="M1698 1058.5h11M1698 1061.5h11" stroke="#555" stroke-dasharray="1.5 1"/><path d="M1704 1056q0-3 6-3" fill="none" stroke="#bbb"/>
          <circle cx="1725.500" cy="1058" r="7" fill="#1c30b8" stroke="#c8d4e8" stroke-width="1.3"/><text x="1722.3" y="1062.7" font-size="13" font-weight="bold" font-family="Noto Sans" fill="#fff">?</text>
          <path d="M1745.5 1049.5h5v4h-5zM1743.5 1051.5h5v4h-5z" fill="none" stroke="#fff"/><path d="M1744 1065h6l-3 3zM1762 1065h8l-4-4z" fill="#fff"/>
          <path d="M1787.5 1056.5h10v9h-10zM1789 1068h8M1785.5 1054v8q0 2 2 2M1783 1058h5v-4h-5z" fill="none" stroke="#fff" stroke-width="1.5"/>
          <path d="M1807 1058h3l4-4v13l-4-4h-3z" fill="#fff"/><path d="M1816 1057q2 3 0 6M1818.5 1055q4 5 0 10" fill="none" stroke="#fff" stroke-width="1.3"/>
        </svg>
      </div>
      <div class="clock">22:31<br>2018/11/14</div>
      <div class="peek"></div>
    `
  }
}
customElements.define('task-bar', TaskBar)

/* ---------- the window ---------- */

class GraphicEditor extends BaseElement {
  css() {
    return `
      :host { display: flex; flex-direction: column; width: 1920px; height: 1080px; color: #000; }
      .window { display: flex; height: 1012px; border-top: 1px solid #4f6f80; }
      .content { width: 1912px; display: flex; flex-direction: column; }
      .edge { width: 8px; background: linear-gradient(90deg, #dcecfa 0 1px, #9ab9dc 2px, #b5cfec 5px, #e6f4ff 6px, #111 7px); }
      .head { display: flex; height: 57px; }
      .work { display: flex; height: 888px; background: #000; }
      .right { display: flex; flex-direction: column; width: 163px; height: 888px; margin-left: auto; }
      .foot { height: 33px; background: #6d8080; padding-top: 3px; }
      .foot div { height: 26px; width: 1910px; background: #b3ffff; border-top: 3px solid #d6ffff; border-bottom: 2px solid #5d9797; outline: 1px solid #000; }
      .foot i { display: block; height: 4px; margin-top: 1px; background: #c9ffff; border-bottom: 1px solid #333; }
      .frame { height: 7px; background: linear-gradient(#7aa2d0, #a9c8ec 60%, #d9edfc 80%, #123); }
    `
  }
  html() {
    return `
      <title-bar></title-bar>
      <div class="window">
        <div class="content">
          <div class="head"><menu-bar></menu-bar><brand-panel></brand-panel></div>
          <div class="work">
            <side-panel></side-panel>
            <board-canvas></board-canvas>
            <div class="right">
              <tool-palette></tool-palette>
              <mini-map></mini-map>
              <coord-readout>X = 78.147963mm
Y = 64.046700mm</coord-readout>
            </div>
          </div>
          <command-bar></command-bar>
          <div class="foot"><div></div><i></i></div>
        </div>
        <div class="edge"></div>
      </div>
      <div class="frame"></div>
      <task-bar></task-bar>
    `
  }
}
customElements.define('graphic-editor', GraphicEditor)
</script>
</body>
</html>
